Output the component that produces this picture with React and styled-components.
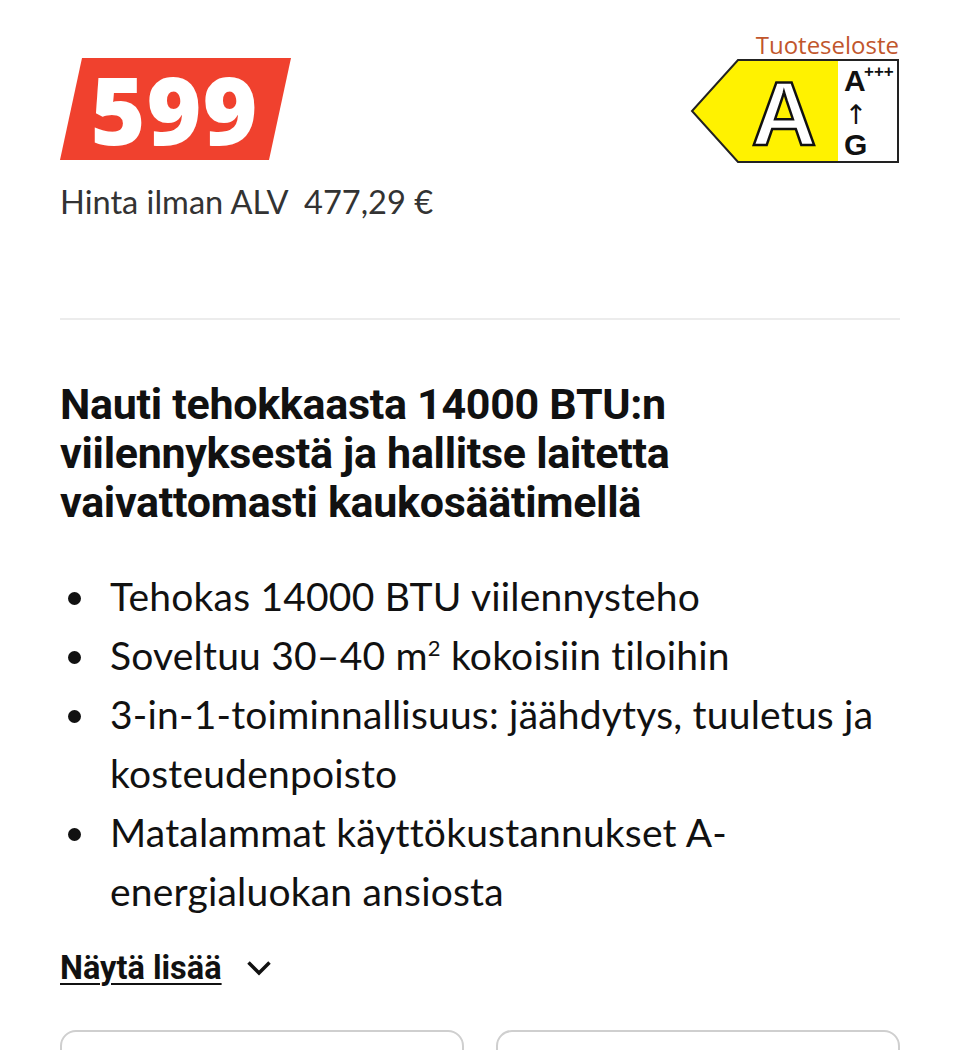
import React from "react";
import styled, { createGlobalStyle } from "styled-components";

const Global = createGlobalStyle`
  html, body { margin: 0; padding: 0; background: #ffffff; }
  body { font-family: Lato, "Open Sans", sans-serif; color: #111; }
  * { box-sizing: border-box; }
`;

const Page = styled.div`
  width: 960px;
  height: 1050px;
  overflow: hidden;
  padding: 31px 60px 0 60px;
`;

const TopRow = styled.div`
  display: flex;
  justify-content: space-between;
  align-items: flex-start;
`;

const PriceBlock = styled.div`
  display: flex;
  flex-direction: column;
  padding-top: 27px;
`;

const PriceBadge = styled.div`
  width: 231px;
  height: 102px;
  background: #f0412e;
  clip-path: polygon(22px 0, 100% 0, calc(100% - 22px) 100%, 0 100%);
  display: flex;
  align-items: center;
  justify-content: center;
  padding-right: 2px;
  color: #ffffff;
  font-family: "Open Sans", sans-serif;
  font-weight: 800;
  font-size: 94px;
  letter-spacing: 1px;
  line-height: 1;
`;

const NetPrice = styled.div`
  margin-top: 22px;
  font-family: Lato, sans-serif;
  font-size: 32.6px;
  color: #333333;
  white-space: pre;
`;

const EnergyBlock = styled.div`
  display: flex;
  flex-direction: column;
  align-items: flex-end;
`;

const EnergyLink = styled.div`
  font-family: "Open Sans", sans-serif;
  font-size: 24px;
  color: #c1562c;
  line-height: 27px;
  margin-right: 1px;
`;

const Divider = styled.hr`
  margin: 97px 0 0 0;
  border: none;
  height: 2px;
  background: #ececec;
`;

const Heading = styled.h2`
  margin: 60px 0 0 0;
  font-family: Roboto, "Liberation Sans", sans-serif;
  font-weight: 700;
  font-size: 43px;
  line-height: 49px;
  letter-spacing: -0.3px;
  color: #111111;
`;

const Bullets = styled.ul`
  margin: 40px 0 0 0;
  padding: 0;
  list-style: none;
`;

const Bullet = styled.li`
  position: relative;
  padding-left: 50px;
  font-family: Lato, sans-serif;
  font-size: 39px;
  line-height: 59px;
  letter-spacing: 0.2px;
  color: #111111;
  &::before {
    content: "";
    position: absolute;
    left: 8px;
    top: 25px;
    width: 13px;
    height: 13px;
    border-radius: 50%;
    background: #111111;
  }
`;

const Sup = styled.sup`
  font-size: 22px;
  line-height: 0;
  vertical-align: 14px;
`;

const ShowMore = styled.div`
  margin-top: 28px;
  display: flex;
  align-items: center;
  gap: 24px;
`;

const ShowMoreText = styled.span`
  font-family: Roboto, "Liberation Sans", sans-serif;
  font-weight: 700;
  font-size: 32.5px;
  color: #111111;
  text-decoration: underline;
  text-decoration-thickness: 2px;
  text-underline-offset: 4px;
`;

const Cards = styled.div`
  margin-top: 43px;
  display: grid;
  grid-template-columns: 1fr 1fr;
  gap: 32px;
`;

const Card = styled.div`
  height: 80px;
  border: 2px solid #cfcfcf;
  border-radius: 16px;
  background: #ffffff;
`;

const EnergyLabel = () => (
  <svg width="210" height="106" viewBox="0 0 210 106">
    <path d="M48 2 H148 V104 H48 L2 53 Z" fill="#fff200" />
    <rect x="148" y="2" width="60" height="102" fill="#ffffff" />
    <path d="M48 2 H208 V104 H48 L2 53 Z" fill="none" stroke="#222" strokeWidth="2" strokeLinejoin="miter" />
    <text
      x="94"
      y="87"
      textAnchor="middle"
      fontFamily="'Liberation Sans', Arial, sans-serif"
      fontWeight="700"
      fontSize="90"
      fill="#ffffff"
      stroke="#111"
      strokeWidth="2.5"
    >
      A
    </text>
    <text x="154" y="33" fontFamily="'Liberation Sans', Arial, sans-serif" fontWeight="700" fontSize="30" fill="#111">
      A
    </text>
    <text x="174" y="19" fontFamily="'Liberation Sans', Arial, sans-serif" fontWeight="700" fontSize="17" fill="#111">
      +++
    </text>
    <text x="166" y="66" textAnchor="middle" fontFamily="'DejaVu Sans', sans-serif" fontSize="27" fill="#111">
      ↑
    </text>
    <text x="154" y="97" fontFamily="'Liberation Sans', Arial, sans-serif" fontWeight="700" fontSize="30" fill="#111">
      G
    </text>
  </svg>
);

const Chevron = () => (
  <svg width="26" height="16" viewBox="0 0 26 16">
    <path d="M2.5 2.5 L13 13 L23.5 2.5" fill="none" stroke="#111" strokeWidth="3.5" />
  </svg>
);

export default function App() {
  return (
    <>
      <Global />
      <Page>
        <TopRow>
          <PriceBlock>
            <PriceBadge>599</PriceBadge>
            <NetPrice>{"Hinta ilman ALV  477,29 €"}</NetPrice>
          </PriceBlock>
          <EnergyBlock>
            <EnergyLink>Tuoteseloste</EnergyLink>
            <EnergyLabel />
          </EnergyBlock>
        </TopRow>
        <Divider />
        <Heading>
          Nauti tehokkaasta 14000 BTU:n viilennyksestä ja hallitse laitetta vaivattomasti kaukosäätimellä
        </Heading>
        <Bullets>
          <Bullet>Tehokas 14000 BTU viilennysteho</Bullet>
          <Bullet>
            Soveltuu 30–40 m<Sup>2</Sup> kokoisiin tiloihin
          </Bullet>
          <Bullet>3-in-1-toiminnallisuus: jäähdytys, tuuletus ja kosteudenpoisto</Bullet>
          <Bullet>Matalammat käyttökustannukset A-energialuokan ansiosta</Bullet>
        </Bullets>
        <ShowMore>
          <ShowMoreText>Näytä lisää</ShowMoreText>
          <Chevron />
        </ShowMore>
        <Cards>
          <Card />
          <Card />
        </Cards>
      </Page>
    </>
  );
}
